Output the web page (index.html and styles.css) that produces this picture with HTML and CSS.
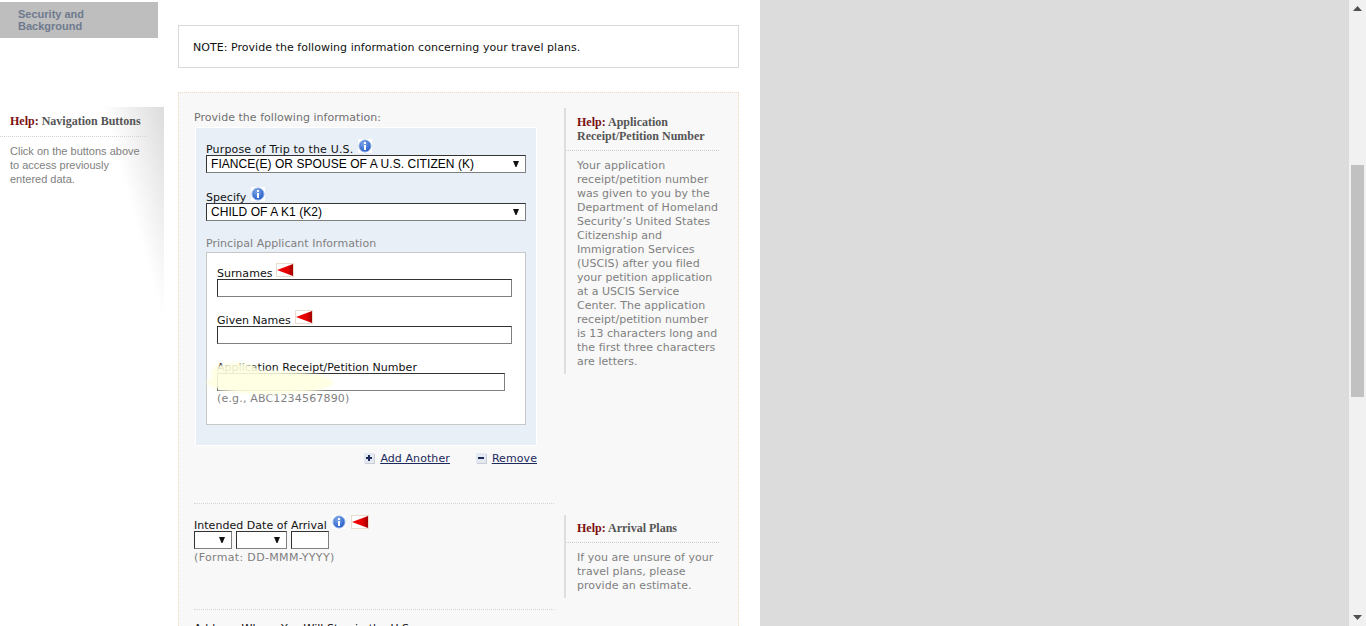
FILE: index.html
```html
<!DOCTYPE html>
<html lang="en">
<head>
<meta charset="utf-8">
<title>Travel Information</title>
<link rel="stylesheet" href="styles.css">
</head>
<body>
<svg class="sprites" width="0" height="0" aria-hidden="true">
  <defs>
    <radialGradient id="infoFill" cx="40%" cy="30%" r="75%">
      <stop offset="0" stop-color="#7fa8ea"/>
      <stop offset="1" stop-color="#1f56c4"/>
    </radialGradient>
    <linearGradient id="flagFill" x1="0" y1="0" x2="1" y2="0">
      <stop offset="0" stop-color="#f50000"/>
      <stop offset="0.65" stop-color="#e40000"/>
      <stop offset="1" stop-color="#a00000"/>
    </linearGradient>
    <symbol id="info" viewBox="0 0 14 14">
      <rect width="14" height="14" fill="#fff"/>
      <circle cx="7" cy="7" r="6" fill="url(#infoFill)" stroke="#8fb0e8" stroke-width="1"/>
      <rect x="6" y="3" width="2" height="2" fill="#fff"/>
      <rect x="6" y="6" width="2" height="5" fill="#fff"/>
    </symbol>
    <symbol id="flag" viewBox="0 0 18 14">
      <rect x="0.5" y="0.5" width="17" height="13" fill="#fff" stroke="#eaddd0"/>
      <path d="M1 7 L17 1 V13 Z" fill="url(#flagFill)"/>
    </symbol>
    <symbol id="arrow" viewBox="0 0 6 6">
      <path d="M0 0 H6 L3.500 6 H2.500 Z" fill="#111"/>
    </symbol>
  </defs>
</svg>
<div class="page">
  <div class="content">
    <aside class="side">
      <div class="nav-tab">Security and Background</div>
      <section class="side-help">
        <h3 class="side-help-title"><span class="help-word">Help:</span> Navigation Buttons</h3>
        <p class="side-help-text">Click on the buttons above to access previously entered data.</p>
      </section>
    </aside>
    <main class="main">
      <div class="note">NOTE: Provide the following information concerning your travel plans.</div>
      <div class="panel">
        <div class="row row-first">
          <div class="fields">
            <div class="intro">Provide the following information:</div>
            <div class="blue-box">
              <label class="label"><span class="label-wide">Purpose of Trip to the U.S.</span><svg class="icon-info"><use href="#info"/></svg></label>
              <div class="select select-wide"><span>FIANCE(E) OR SPOUSE OF A U.S. CITIZEN (K)</span><svg class="arrow"><use href="#arrow"/></svg></div>
              <label class="label label-spaced">Specify<svg class="icon-info"><use href="#info"/></svg></label>
              <div class="select select-wide"><span>CHILD OF A K1 (K2)</span><svg class="arrow"><use href="#arrow"/></svg></div>
              <div class="group-title">Principal Applicant Information</div>
              <div class="white-box">
                <label class="label">Surnames<svg class="icon-flag"><use href="#flag"/></svg></label>
                <div class="input input-full"></div>
                <label class="label label-gap">Given Names<svg class="icon-flag"><use href="#flag"/></svg></label>
                <div class="input input-full"></div>
                <label class="label label-gap">Application Receipt/Petition Number</label>
                <div class="input input-short"></div>
                <div class="hint hint-example">(e.g., ABC1234567890)</div>
                <div class="smudge"></div>
              </div>
            </div>
            <div class="actions">
              <a class="action" href="#"><svg class="action-icon" viewBox="0 0 11 11"><rect x="1" y="1" width="10" height="10" fill="#c9ced8"/><rect x="0" y="0" width="10" height="10" fill="#e4e8f0"/><path d="M2 4h2V2h2v2h2v2H6v2H4V6H2z" fill="#1c2a5c"/></svg><span>Add Another</span></a>
              <a class="action" href="#"><svg class="action-icon" viewBox="0 0 11 11"><rect x="1" y="1" width="10" height="10" fill="#c9ced8"/><rect x="0" y="0" width="10" height="10" fill="#e4e8f0"/><rect x="2" y="4" width="6" height="2" fill="#1c2a5c"/></svg><span>Remove</span></a>
            </div>
          </div>
          <section class="help help-first">
            <h3 class="help-title"><span class="help-word">Help:</span> Application Receipt/Petition Number</h3>
            <p class="help-text">Your application receipt/petition number was given to you by the Department of Homeland Security’s United States Citizenship and Immigration Services (USCIS) after you filed your petition application at a USCIS Service Center. The application receipt/petition number is 13 characters long and the first three characters are letters.</p>
          </section>
        </div>
        <div class="divider"></div>
        <div class="row row-date">
          <div class="fields">
            <label class="label">Intended Date of Arrival<svg class="icon-info"><use href="#info"/></svg><svg class="icon-flag icon-flag-after"><use href="#flag"/></svg></label>
            <div class="date-row">
              <div class="select select-day"><svg class="arrow"><use href="#arrow"/></svg></div>
              <div class="select select-month"><svg class="arrow"><use href="#arrow"/></svg></div>
              <div class="input input-year"></div>
            </div>
            <div class="hint hint-date">(Format: DD-MMM-YYYY)</div>
          </div>
          <section class="help help-second">
            <h3 class="help-title help-title-single"><span class="help-word">Help:</span> Arrival Plans</h3>
            <p class="help-text">If you are unsure of your travel plans, please provide an estimate.</p>
          </section>
        </div>
        <div class="divider"></div>
        <div class="address-label">Address Where You Will Stay in the U.S.</div>
      </div>
    </main>
  </div>
  <div class="gutter"></div>
  <div class="scrollbar">
    <svg class="scroll-arrow" viewBox="0 0 9 5"><path d="M4.500 0 L9 5 H0 Z" fill="#505050"/></svg>
    <div class="track"><div class="thumb"></div></div>
    <svg class="scroll-arrow" viewBox="0 0 9 5"><path d="M0 0 H9 L4.500 5 Z" fill="#505050"/></svg>
  </div>
</div>
</body>
</html>
```
FILE: styles.css
```css
* { box-sizing: border-box; }
html, body { margin: 0; padding: 0; height: 626px; overflow: hidden; }
body { font-family: "DejaVu Sans", Verdana, sans-serif; font-size: 11px; letter-spacing: .03px; color: #111; background: #dcdcdc; }
.sprites { position: absolute; }
h3, p { margin: 0; }

.page { display: flex; height: 626px; overflow: hidden; }
.content { display: flex; width: 760px; height: 626px; background: #fff; overflow: hidden; flex: none; }
.gutter { flex: 1; background: #dcdcdc; }

.side { width: 178px; flex: none; padding-top: 2px; }
.nav-tab { width: 158px; height: 36px; padding: 6px 40px 0 18px; background: #bebebe; color: #6f7a8e; font: bold 11px/12px "Liberation Sans", Arial, sans-serif; letter-spacing: 0; }
.side-help { width: 164px; height: 225px; margin-top: 69px; background: linear-gradient(254deg, #dcdcdc 0, #fff 27%); }
.side-help-title { height: 30px; padding: 7px 0 0 10px; border-bottom: 1px dotted #d4d4d4; margin-right: 17px; color: #555; font: bold 12px/15px "Liberation Serif", "Times New Roman", serif; letter-spacing: 0; white-space: nowrap; }
.help-word { color: #7a1010; }
.side-help-text { padding: 7px 20px 0 10px; color: #808080; font: 11px/14px "Liberation Sans", Arial, sans-serif; letter-spacing: 0; }

.main { width: 561px; flex: none; padding-top: 25px; }
.note { height: 43px; padding: 15px 14px 0; border: 1px solid #d9d9d9; line-height: 14px; letter-spacing: .04px; color: #111; }
.panel { height: 600px; margin-top: 24px; border: 1px dotted #ecd9bf; background: #f8f8f8; padding: 16px 19px 0 15px; }

.row { display: flex; justify-content: space-between; }
.row-first { height: 394px; }
.row-date { height: 94px; margin-top: 11px; }
.fields { width: 343px; flex: none; }
.intro { color: #707070; line-height: 18px; }

.blue-box { width: 342px; height: 319px; margin: 0 0 0 1px; padding: 11px 10px 0; background: #e8eff7; border: 1px solid #fff; }
.label { display: flex; align-items: flex-start; height: 16px; padding-top: 4px; line-height: 14px; color: #111; white-space: nowrap; }
.label-wide { letter-spacing: .16px; }
.label-spaced { margin-top: 14px; }
.label-gap { margin-top: 13px; }
.icon-info { width: 14px; height: 14px; flex: none; margin: -4px 0 0 5px; }
.icon-flag { width: 18px; height: 14px; flex: none; margin: -4px 0 0 4px; }
.icon-flag-after { margin-left: 5px; }

.select, .input { display: block; height: 18px; background: #fff; border: 1px solid; border-color: #333 #808080 #808080 #333; }
.select { display: flex; align-items: center; padding: 0 6px 0 4px; font: 12px/16px "Liberation Sans", Arial, sans-serif; letter-spacing: .06px; color: #000; }
.select-wide { width: 320px; }
.arrow { width: 6px; height: 6px; flex: none; margin-left: auto; }
.group-title { margin-top: 16px; color: #808080; line-height: 14px; }

.white-box { position: relative; width: 320px; height: 173px; margin-top: 1px; padding: 10px 10px 0; background: #fff; border: 1px solid #c8c8c8; }
.input-full { width: 295px; }
.input-short { width: 288px; }
.hint { color: #808080; line-height: 14px; }
.hint-example { margin-top: 1px; letter-spacing: .17px; }
.smudge { position: absolute; left: 0; top: 118px; width: 126px; height: 23px; border-radius: 50%; background: #ffffe0; opacity: .9; filter: blur(1.500px); }
.smudge::before { content: ""; position: absolute; left: 4px; top: -8px; width: 50px; height: 20px; border-radius: 50%; background: #ffffe0; }

.actions { display: flex; justify-content: flex-end; gap: 26px; margin-top: 4px; }
.action { display: flex; align-items: center; gap: 5px; height: 16px; color: #1c2a5c; }
.action span { text-decoration: underline; letter-spacing: .08px; }
.action-icon { width: 11px; height: 11px; flex: none; }

.help { width: 155px; flex: none; border-left: 2px solid #dedede; align-self: flex-start; }
.help-first { height: 266px; margin-top: -1px; }
.help-second { height: 83px; }
.help-title { padding: 7px 0 7px 11px; border-bottom: 1px dotted #cfcfcf; color: #555; font: bold 12px/14px "Liberation Serif", "Times New Roman", serif; letter-spacing: 0; }
.help-title-single { padding: 6px 0 7px 11px; }
.help-text { padding: 8px 0 0 11px; color: #808080; line-height: 14px; }

.divider { height: 1px; border-top: 1px dotted #d4d4d4; width: 360px; }
.date-row { display: flex; gap: 4px; }
.select-day { width: 38px; }
.select-month { width: 51px; }
.input-year { width: 38px; }
.hint-date { margin-top: 2px; letter-spacing: .34px; }
.address-label { margin-top: 12px; line-height: 14px; color: #111; }

.scrollbar { width: 17px; flex: none; display: flex; flex-direction: column; align-items: center; background: #f1f1f1; padding: 6px 0; }
.scroll-arrow { width: 9px; height: 5px; flex: none; }
.track { flex: 1; width: 100%; padding: 154px 2px 0; }
.thumb { height: 232px; background: #c1c1c1; }
```
